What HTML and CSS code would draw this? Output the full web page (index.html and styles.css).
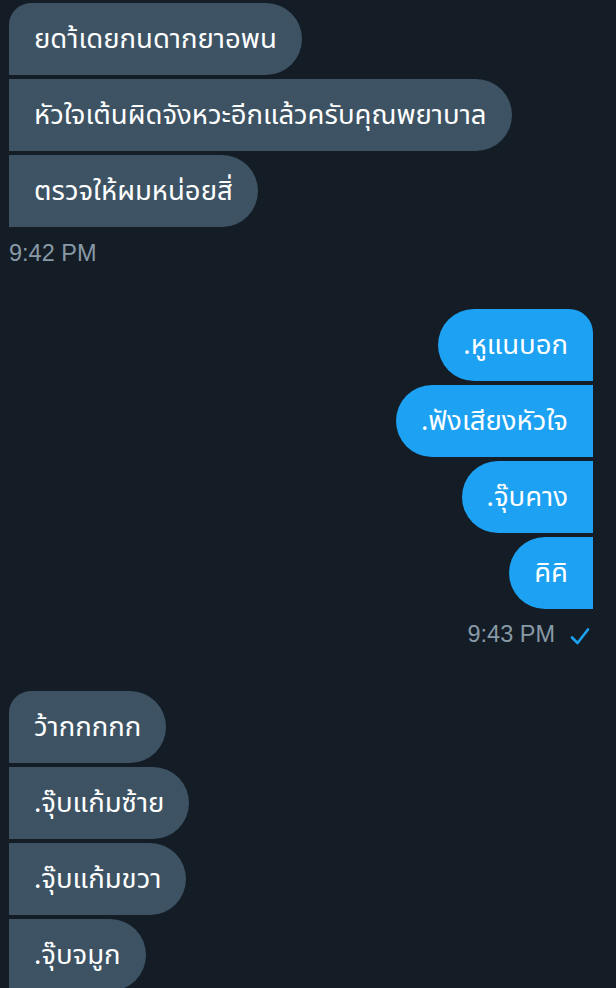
FILE: index.html
```html
<!DOCTYPE html>
<html lang="th">
<head>
    <meta charset="UTF-8">
    <meta name="viewport" content="width=device-width, initial-scale=1.0">
    <title>Messages</title>
    <link rel="stylesheet" href="styles.css">
</head>
<body>
    <div class="chat">
        <div class="group in">
            <div class="msg">ยดา้เดยกนดากยาอพน</div>
            <div class="msg">หัวใจเต้นผิดจังหวะอีกแล้วครับคุณพยาบาล</div>
            <div class="msg">ตรวจให้ผมหน่อยสิ่</div>
        </div>
        <div class="time">9:42 PM</div>

        <div class="group out">
            <div class="msg">.หูแนบอก</div>
            <div class="msg">.ฟังเสียงหัวใจ</div>
            <div class="msg">.จุ๊บคาง</div>
            <div class="msg">คิคิ</div>
        </div>
        <div class="time time-out">
            9:43 PM
            <svg class="check" width="22" height="22" viewBox="0 0 22 22">
                <path d="M3 12.5 L8.5 18 L19 4.5" fill="none" stroke="#1da1f2" stroke-width="2.6" stroke-linecap="round" stroke-linejoin="round"/>
            </svg>
        </div>

        <div class="group in">
            <div class="msg">ว้ากกกกก</div>
            <div class="msg">.จุ๊บแก้มซ้าย</div>
            <div class="msg">.จุ๊บแก้มขวา</div>
            <div class="msg">.จุ๊บจมูก</div>
        </div>
    </div>
</body>
</html>
```

FILE: styles.css
```css
body {
    margin: 0;
    background-color: #141d26;
    font-family: "Noto Sans Thai", "Noto Sans", "Liberation Sans", sans-serif;
    color: #fff;
}
.chat {
    padding: 3px 23px 0 9px;
    display: flex;
    flex-direction: column;
    height: 985px;
    overflow: hidden;
}
.group {
    display: flex;
    flex-direction: column;
    gap: 4px;
}
.group.in {
    align-items: flex-start;
}
.group.out {
    align-items: flex-end;
    margin-top: 42px;
}
.group.out + .time + .group.in {
    margin-top: 43px;
}
.msg {
    height: 72px;
    box-sizing: border-box;
    padding: 0 25px;
    display: flex;
    align-items: center;
    font-size: 27.5px;
    white-space: nowrap;
}
.in .msg {
    background: #3d5364;
    border-radius: 0 36px 36px 0;
}
.in .msg:first-child {
    border-top-left-radius: 22px;
}
.out .msg {
    background: #1da1f2;
    border-radius: 36px 0 0 36px;
}
.out .msg:first-child {
    border-top-right-radius: 24px;
}
.time {
    margin-top: 12px;
    height: 28px;
    line-height: 28px;
    font-family: "Liberation Sans", Arial, sans-serif;
    font-size: 23.5px;
    color: #8899a6;
}
.time-out {
    margin-top: 11px;
    display: flex;
    align-items: center;
    justify-content: flex-end;
    gap: 14px;
    padding-right: 2px;
}
.check {
    display: block;
    margin-top: 4px;
}
```
